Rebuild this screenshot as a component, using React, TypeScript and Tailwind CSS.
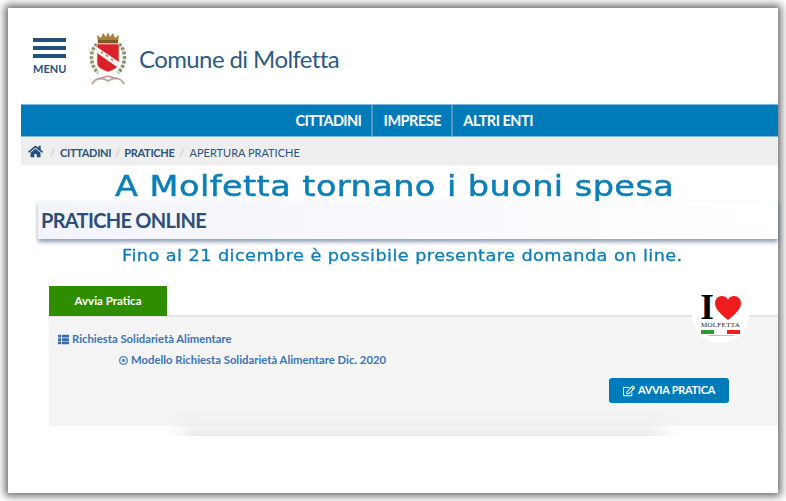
import React from 'react';
import { FaHome, FaThList, FaRegEdit, FaRegDotCircle } from 'react-icons/fa';

const Crest = () => (
  <svg width="38" height="54" viewBox="0 0 38 54" className="shrink-0">
    {/* wreath */}
    <path d="M8 12C1 18 0 32 9 41" fill="none" stroke="#8b9a6d" strokeWidth="3.5" strokeDasharray="3 1.5" />
    <path d="M30 12C37 18 38 32 29 41" fill="none" stroke="#7f9268" strokeWidth="3.5" strokeDasharray="3 1.5" />
    {/* ribbon */}
    <path d="M3 52C8 44 14 46 19 49C24 46 31 44 35 52" fill="none" stroke="#b9a9a0" strokeWidth="2" />
    <path d="M10 47L19 44L28 47" fill="none" stroke="#c98f8f" strokeWidth="1.5" />
    {/* crown */}
    <path d="M9 11L8 3L12 6L14 1L17 5L19 0L21 5L24 1L26 6L30 3L29 11Z" fill="#a9803a" />
    <rect x="9" y="8" width="20" height="3.5" fill="#7d5a26" />
    {/* shield */}
    <path d="M8 12H30V31C30 36 24 38 19 40C14 38 8 36 8 31Z" fill="#d8212b" stroke="#e8d9b0" strokeWidth="0.7" />
    <path d="M8 15L30 30V35L28 35L8 21Z" fill="#f4f1ee" />
    <path d="M12 20L14 21M17 23L19 24.500M22 27L24 28.500" stroke="#c9515a" strokeWidth="1.2" />
  </svg>
);

const Heart = () => (
  <svg width="26" height="24" viewBox="0 0 27 25">
    <path d="M13.500 25C5 18 0 13.500 0 7.500C0 3 3.500 0 7 0C10 0 12.500 1.500 13.500 4C14.500 1.500 17 0 20 0C23.500 0 27 3 27 7.500C27 13.500 22 18 13.500 25Z" fill="#ee1c1c" />
  </svg>
);

const App = () => {
  return (
    <div className="relative w-[786px] h-[501px] overflow-hidden bg-white pt-2 pl-2 font-['Lato',sans-serif]">
      <div className="relative w-[770px] h-[485px] bg-white shadow-[0_0_8px_3px_rgba(0,0,0,0.6)]">
        {/* Header */}
        <div className="flex items-center h-[96px] pl-[25px]">
          <div className="w-[33px] flex flex-col mt-[1px]">
            <div className="h-1 bg-[#23517c]" />
            <div className="h-1 bg-[#23517c] mt-1" />
            <div className="h-1 bg-[#23517c] mt-1" />
            <div className="text-[11px] leading-[12px] mt-[5px] font-bold text-[#23517c] whitespace-nowrap">MENU</div>
          </div>
          <div className="ml-[23px] mt-[5px]">
            <Crest />
          </div>
          <div className="ml-[12px] text-[24px] leading-none text-[#2c5a85] tracking-[-0.6px] mt-[6px] whitespace-nowrap">Comune di Molfetta</div>
        </div>

        {/* Nav */}
        <div className="ml-[13px] h-[33px] bg-[#007bba] border-y border-[#7fb8d8] flex justify-end pr-[245px]">
          <div className="flex items-center px-[10px] border-r-2 border-[#4a9bc8] text-white text-[14.500px] font-bold tracking-[-0.6px] whitespace-nowrap">CITTADINI</div>
          <div className="flex items-center px-[10px] w-[80px] justify-center border-r-2 border-[#4a9bc8] text-white text-[14.500px] font-bold tracking-[-0.5px] whitespace-nowrap">IMPRESE</div>
          <div className="flex items-center pl-[10px] text-white text-[14.500px] font-bold tracking-[-0.5px] whitespace-nowrap">ALTRI ENTI</div>
        </div>

        {/* Breadcrumb */}
        <div className="ml-[13px] h-[28px] bg-[#eeeeee] flex items-center pl-[7px] pt-[4px] text-[11px] text-[#2d5478] whitespace-nowrap">
          <FaHome className="text-[15px] text-[#23517c] -mt-[4px]" />
          <span className="ml-[7px] mr-[5px] text-[#c4c4c4]">/</span>
          <span className="font-bold tracking-[-0.3px]">CITTADINI</span>
          <span className="mx-[4px] text-[#c4c4c4]">/</span>
          <span className="font-bold tracking-[-0.3px]">PRATICHE</span>
          <span className="mx-[5px] text-[#c4c4c4]">/</span>
          <span>APERTURA PRATICHE</span>
        </div>

        {/* Heading */}
        <div className="h-[36px] text-center pl-[3px] pt-[5px] text-[#0b7fb8] text-[29px] leading-[32px] font-['DejaVu_Sans',sans-serif] tracking-[0.4px] whitespace-nowrap scale-x-[1.155] [-webkit-text-stroke:0.5px_#0b7fb8]">
          A Molfetta tornano i buoni spesa
        </div>

        {/* Band */}
        <div className="ml-[30px] h-[38px] pl-[3px] flex items-center bg-gradient-to-r from-[#f3f3fc] to-white shadow-[0_3px_4px_rgba(50,80,120,0.55)] text-[#2b4f78] text-[20px] font-bold tracking-[-0.7px] whitespace-nowrap relative">
          PRATICHE ONLINE
        </div>

        <div className="h-[47px] text-center pl-[17px] pt-[8px] text-[#0b7fb8] text-[16px] leading-[18px] font-['DejaVu_Sans',sans-serif] tracking-[0.4px] whitespace-nowrap scale-x-[1.105] [-webkit-text-stroke:0.3px_#0b7fb8]">
          Fino al 21 dicembre è possibile presentare domanda on line.
        </div>

        {/* Tab */}
        <div className="ml-[41px] border-b-2 border-[#e6e6e6] h-[31px]">
          <div className="w-[118px] h-[30px] bg-[#2f8e00] flex items-center justify-center text-white text-[11.500px] font-bold">Avvia Pratica</div>
        </div>

        {/* Panel */}
        <div className="ml-[41px] h-[109px] bg-[#f4f4f4] pl-[9px] pt-[14px] relative text-[#3a74b4] text-[11.300px] font-bold">
          <div className="flex items-center gap-[3px] h-[16px] whitespace-nowrap">
            <FaThList className="text-[11px] text-[#2f6fb0]" />
            <span>Richiesta Solidarietà Alimentare</span>
          </div>
          <div className="flex items-center gap-[3px] h-[16px] mt-[5px] ml-[61px] whitespace-nowrap">
            <FaRegDotCircle className="text-[9px] text-[#4f86b8] stroke-[30px]" />
            <span>Modello Richiesta Solidarietà Alimentare Dic. 2020</span>
          </div>
          <div className="flex justify-end pr-[49px] mt-[10px]">
            <div className="w-[120px] h-[25px] rounded-[3px] bg-[#007bba] flex items-center justify-center gap-[3px] text-white text-[11px] font-bold tracking-[-0.3px] whitespace-nowrap">
              <FaRegEdit className="text-[12px]" />
              AVVIA PRATICA
            </div>
          </div>
        </div>

        {/* I love Molfetta badge */}
        <div className="absolute left-[684px] top-[274px] w-[57px] h-[61px] rounded-b-full bg-white flex flex-col items-center pt-[14px]">
          <div className="flex items-center h-[24px]">
            <span className="font-['Liberation_Serif',serif] font-bold text-[35px] leading-[24px] text-black mr-[1px]">I</span>
            <Heart />
          </div>
          <div className="mt-[2px] text-[7px] leading-[7px] font-['Liberation_Serif',serif] text-[#222] tracking-[0.3px]">MOLFETTA</div>
          <div className="flex w-[39px] h-[4px] mt-[1px]">
            <div className="flex-1 bg-[#2e9a2e]" />
            <div className="flex-1 bg-white" />
            <div className="flex-1 bg-[#ee1c1c]" />
          </div>
          <div className="w-[26px] h-px mt-[1px] bg-[#c9c0c0]" />
        </div>

        {/* Faint shadow under the panel */}
        <div className="absolute left-[157px] top-[404px] w-[513px] h-[24px] bg-gradient-to-b from-transparent to-[#ebebeb] [mask-image:linear-gradient(to_right,transparent,black_6%,black_94%,transparent)]" />
      </div>
    </div>
  );
};

export default App;
